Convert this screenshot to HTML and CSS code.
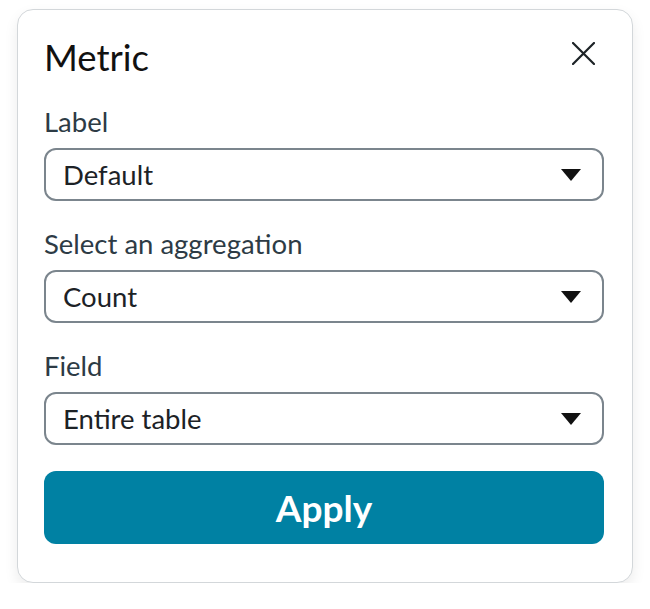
FILE: index.html
```html
<!DOCTYPE html>
<html lang="en">
<head>
    <meta charset="UTF-8">
    <title>Metric</title>
    <link rel="stylesheet" href="styles.css">
</head>
<body>

    <div class="card">
        <div class="header">
            <h1>Metric</h1>
            <button class="close" aria-label="Close">
                <svg width="23" height="23" viewBox="0 0 23 23">
                    <path d="M1 1 L22 22 M22 1 L1 22" stroke="#1c2226" stroke-width="2.2" stroke-linecap="round" fill="none"/>
                </svg>
            </button>
        </div>

        <div class="form-group">
            <label>Label</label>
            <div class="select">
                <span>Default</span>
                <span class="arrow"></span>
            </div>
        </div>

        <div class="form-group">
            <label>Select an aggrega<span class="lig">tion</span></label>
            <div class="select">
                <span>Count</span>
                <span class="arrow"></span>
            </div>
        </div>

        <div class="form-group">
            <label>Field</label>
            <div class="select">
                <span>Entire table</span>
                <span class="arrow"></span>
            </div>
        </div>

        <button class="apply">Apply</button>
    </div>

</body>
</html>
```

FILE: styles.css
```css
body {
    background-color: #fff;
    font-family: Lato, "Open Sans", sans-serif;
    margin: 0;
    padding: 0;
}

.card {
    width: 616px;
    box-sizing: border-box;
    margin: 9px 0 0 17px;
    padding: 26px 28px 38px 26px;
    background-color: #fff;
    border: 1px solid #d3d7da;
    border-radius: 16px;
    box-shadow: 0 6px 14px rgba(0, 0, 0, 0.08);
}

.header {
    display: flex;
    justify-content: space-between;
    align-items: flex-start;
    margin-bottom: 25px;
}

h1 {
    margin: 0;
    font-size: 36.5px;
    font-weight: 400;
    line-height: 1.2;
    color: #111;
}

.close {
    background: none;
    border: none;
    padding: 0;
    margin: 6px 9px 0 0;
    width: 23px;
    height: 23px;
    cursor: pointer;
}

.close svg {
    display: block;
}

.form-group {
    margin-bottom: 26px;
}

label {
    display: block;
    margin-bottom: 10px;
    font-size: 27.5px;
    line-height: 1.2;
    color: #2d3b45;
}

.lig {
    font-variant-ligatures: discretionary-ligatures;
}

.select {
    height: 53px;
    box-sizing: border-box;
    display: flex;
    align-items: center;
    justify-content: space-between;
    padding: 0 21px 0 17px;
    border: 2px solid #7b858d;
    border-radius: 12px;
    font-size: 27.5px;
    line-height: 1.2;
    color: #1c2226;
}

.arrow {
    width: 0;
    height: 0;
    border-left: 10px solid transparent;
    border-right: 10px solid transparent;
    border-top: 12px solid #111;
    margin-top: 2px;
}

.apply {
    display: block;
    width: 100%;
    height: 73px;
    background-color: #0081a3;
    color: #fff;
    border: none;
    border-radius: 12px;
    font-family: Lato, "Open Sans", sans-serif;
    font-size: 37px;
    font-weight: bold;
    cursor: pointer;
}
```
